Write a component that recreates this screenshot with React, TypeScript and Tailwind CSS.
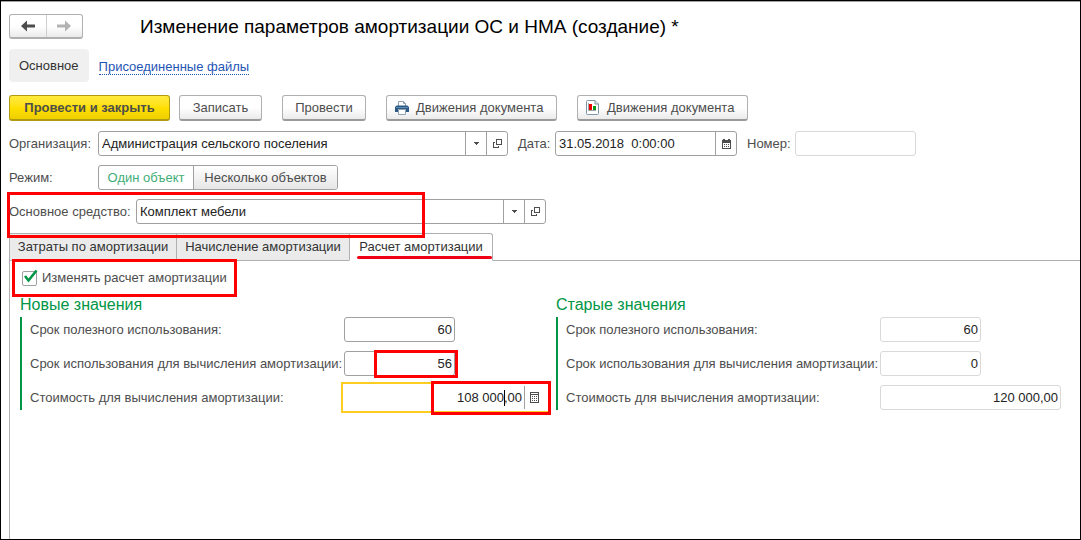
import { useState } from "react";
import type { ReactNode } from "react";

const line = "border-[#a0a0a0]";
const buttonLook =
  "flex h-[26px] items-center rounded-[3px] border border-[#b0b0b0] border-b-2 border-b-[#9a9a9a] bg-linear-to-b from-white from-50% to-[#ebebeb] text-[#4d4d4d]";

function ArrowIcon({ back = false }: { back?: boolean }) {
  return (
    <svg width="16" height="12" viewBox="0 0 16 12" className={back ? "text-[#4d4d4d]" : "text-[#b3b3b3]"}>
      {back ? (
        <path d="M1 6 7 .5V4.500h8v3H7v4z" fill="currentColor" />
      ) : (
        <path d="M15 6 9 .5V4.500H1v3h8v4z" fill="currentColor" />
      )}
    </svg>
  );
}

function PrinterIcon() {
  return (
    <svg width="14" height="14" viewBox="0 0 14 14">
      <path d="M3.500 5V.5h5l2 2V5" fill="#fff" stroke="#8fa2b1" />
      <path d="M8.500.5v2h2" fill="none" stroke="#8fa2b1" />
      <path d="M1.500 4.500h11L14 6v5h-3V8.500H3V11H0V6z" fill="#2c5a85" />
      <path d="M1 6.500h12" stroke="#5e8bb0" />
      <path d="M3.500 8.500h7v5h-7z" fill="#fff" stroke="#8fa2b1" />
    </svg>
  );
}

function ReportIcon() {
  return (
    <svg width="14" height="15" viewBox="0 0 14 15">
      <path d="M.5 1.500q0-1 1-1H9l3.500 3.500v9.500q0 1-1 1h-10q-1 0-1-1z" fill="#fff" stroke="#8095a5" />
      <path d="M9 .5V4h3.500" fill="#e4eaee" stroke="#8095a5" />
      <path d="M2.500 3v7.500H10" fill="none" stroke="#9aa5ad" />
      <path d="M3 4h3v6H3z" fill="#f00000" />
      <path d="M7 6h3v4H7z" fill="#0a9a1a" />
    </svg>
  );
}

function CalendarIcon() {
  return (
    <svg width="9" height="10" viewBox="0 0 9 10" shapeRendering="crispEdges">
      <path d="M0 1h1V0h2v1h3V0h2v1h1v9H0z" fill="#4d4d4d" />
      <path d="M1 4h7v5H1z" fill="#fff" />
      <path d="M2 5h1v1H2zM4 5h1v1H4zM6 5h1v1H6zM2 7h1v1H2zM4 7h1v1H4zM6 7h1v1H6z" fill="#4d4d4d" />
    </svg>
  );
}

function CalculatorIcon() {
  return (
    <svg width="9" height="11" viewBox="0 0 9 11" shapeRendering="crispEdges">
      <path d="M.5.5h8v10h-8zM0 2.500h9" fill="none" stroke="#4d4d4d" />
      <path
        d="M2 4h1v1H2zM4 4h1v1H4zM6 4h1v1H6zM2 6h1v1H2zM4 6h1v1H4zM6 6h1v1H6zM2 8h1v1H2zM4 8h1v1H4zM6 8h1v1H6z"
        fill="#4d4d4d"
      />
    </svg>
  );
}

function OpenIcon() {
  return (
    <svg width="9" height="9" viewBox="0 0 9 9" shapeRendering="crispEdges">
      <path d="M3.500.5h5v5h-5zM2 3.500H.5v5h5V7" fill="none" stroke="#4d4d4d" />
    </svg>
  );
}

// Red frame that points at a place in the form
function Mark({ className }: { className: string }) {
  return <span className={`pointer-events-none absolute border-3 border-[#f00] ${className}`} />;
}

function Picker({ id, value }: { id: string; value: string }) {
  return (
    <div className={`flex h-[25px] w-[410px] rounded-[3px] border ${line}`}>
      <div className="relative flex-1">
        <select id={id} className="h-full w-full appearance-none bg-transparent pl-[3px] text-[#222] outline-none">
          <option>{value}</option>
        </select>
        <span
          className={`pointer-events-none absolute inset-y-0 right-0 flex w-[21px] items-center justify-center border-l ${line}`}
        >
          <svg width="5" height="3" viewBox="0 0 5 3" shapeRendering="crispEdges">
            <path d="M0 0h5v1H4v1H3v1H2V2H1V1H0z" fill="#4d4d4d" />
          </svg>
        </span>
      </div>
      <button aria-label="Открыть" className={`flex w-[21px] items-center justify-center border-l ${line}`}>
        <OpenIcon />
      </button>
    </div>
  );
}

function Group({ title, children }: { title: string; children: ReactNode }) {
  return (
    <section>
      <h2 className="h-[22px] text-base leading-5 text-[#009646]">{title}</h2>
      <div className="flex flex-col gap-[9px] border-l-2 border-[#009646] pl-2">{children}</div>
    </section>
  );
}

function Row({ id, label, children }: { id: string; label: string; children: ReactNode }) {
  return (
    <div className="flex h-[25px] items-center">
      <label htmlFor={id} className="w-[314px] shrink-0 whitespace-nowrap">
        {label}
      </label>
      {children}
    </div>
  );
}

const numberBox = "h-[25px] rounded-[3px] border pr-[2px] text-right text-[#222] outline-none";

export default function App() {
  const [changeCalc, setChangeCalc] = useState(true);

  return (
    <main className="flex min-h-screen flex-col border border-black bg-white pl-2 font-['Liberation_Sans',Arial,sans-serif] text-[13px] leading-4 text-[#4d4d4d]">
      <header className="-ml-2 flex items-center border-t border-[#a0a0a0] pt-3 pl-2">
        <div className="flex h-[25px] w-[74px] rounded-[3px] border border-b-2 border-[#b0b0b0] bg-linear-to-b from-white from-50% to-[#ebebeb]">
          <button aria-label="Назад" className="flex flex-1 items-center justify-center">
            <ArrowIcon back />
          </button>
          <button aria-label="Вперед" className="flex flex-1 items-center justify-center border-l border-[#d0d0d0]">
            <ArrowIcon />
          </button>
        </div>
        <h1 className="ml-[57px] text-[19px] leading-[25px] text-black">
          Изменение параметров амортизации ОС и НМА (создание) *
        </h1>
      </header>

      <nav className="mt-[10px] flex h-[33px] items-center gap-[10px]">
        <button className="h-full rounded-[4px] bg-[#f0f0f0] px-[10px] text-[#333]">Основное</button>
        <a href="#files" className="mt-1 border-b border-dotted border-[#1f55b5] leading-[14px] text-[#1f55b5]">
          Присоединенные файлы
        </a>
      </nav>

      <div className="mt-[13px] flex">
        <button className="h-[26px] w-[161px] rounded-[3px] border border-b-2 border-[#b09a10] bg-linear-to-b from-[#ffea3d] via-[#ffe000] to-[#efcf00] font-bold text-[#4d4d4d]">
          Провести и закрыть
        </button>
        <button className={`${buttonLook} ml-[9px] w-[83px] justify-center`}>Записать</button>
        <button className={`${buttonLook} ml-5 w-[84px] justify-center`}>Провести</button>
        <button className={`${buttonLook} ml-5 w-[171px] gap-[7px] pl-2`}>
          <PrinterIcon />
          Движения документа
        </button>
        <button className={`${buttonLook} ml-5 w-[171px] gap-[7px] pl-2`}>
          <ReportIcon />
          Движения документа
        </button>
      </div>

      <div className="mt-[10px] flex items-center">
        <label htmlFor="org" className="w-[89px]">
          Организация:
        </label>
        <Picker id="org" value="Администрация сельского поселения" />
        <label htmlFor="date" className="ml-[10px] w-[37px]">
          Дата:
        </label>
        <div className={`flex h-[25px] w-[182px] rounded-[3px] border ${line}`}>
          <input
            id="date"
            defaultValue="31.05.2018  0:00:00"
            className="min-w-0 flex-1 pl-[3px] text-[#222] outline-none"
          />
          <button aria-label="Календарь" className={`flex w-[21px] items-center justify-center border-l ${line}`}>
            <CalendarIcon />
          </button>
        </div>
        <label htmlFor="number" className="ml-[10px] w-12">
          Номер:
        </label>
        <input id="number" className="h-[25px] w-[121px] rounded-[3px] border border-[#d9d9d9] px-[3px] outline-none" />
      </div>

      <div className="mt-[9px] flex items-center">
        <span className="w-[89px]">Режим:</span>
        <div className={`flex h-[25px] w-[240px] overflow-hidden rounded-[3px] border ${line}`}>
          <button className="w-[94px] text-[#3fae78]">Один объект</button>
          <button className={`flex-1 border-l bg-linear-to-b from-white to-[#e6e6e6] ${line}`}>
            Несколько объектов
          </button>
        </div>
      </div>

      <div className="relative mt-[9px] flex items-center">
        <label htmlFor="asset" className="w-[127px]">
          Основное средство:
        </label>
        <Picker id="asset" value="Комплект мебели" />
        <Mark className="-top-[7px] -left-[2px] z-10 h-[46px] w-[418px]" />
      </div>

      <div role="tablist" className="mt-[9px] flex h-7 text-[#333]">
        <button role="tab" className="w-[167px] border border-r-0 border-[#b0b0b0] bg-[#ebebeb]">
          Затраты по амортизации
        </button>
        <button role="tab" className="w-[173px] border border-r-0 border-[#b0b0b0] bg-[#ebebeb]">
          Начисление амортизации
        </button>
        <button
          role="tab"
          aria-selected="true"
          className="relative w-[144px] rounded-tr-[3px] border border-[#b0b0b0] border-b-white"
        >
          Расчет амортизации
          <span className="absolute right-0 bottom-px left-[7px] h-[3px] rounded-full bg-[#f00014]" />
        </button>
        <div className="flex-1 border-b border-[#b0b0b0]" />
      </div>

      <div className="flex-1 border-l border-[#b0b0b0] pr-3 pl-[10px]">
        <div className="relative flex h-[34px] items-center">
          <label className="flex items-center gap-[5px] pl-[2px]">
            <span className="relative h-[15px] w-[15px]">
              <input
                type="checkbox"
                checked={changeCalc}
                onChange={(e) => setChangeCalc(e.target.checked)}
                className={`block h-[15px] w-[15px] appearance-none rounded-[2px] border ${line}`}
              />
              {changeCalc && (
                <svg
                  width="15"
                  height="15"
                  viewBox="0 0 15 15"
                  className="pointer-events-none absolute inset-0 overflow-visible"
                >
                  <path d="M3 5 6.500 9.500 14.500-.5" fill="none" stroke="#009646" strokeWidth="2.600" />
                </svg>
              )}
            </span>
            Изменять расчет амортизации
          </label>
          <Mark className="-top-[2px] -left-2 h-[38px] w-[225px]" />
        </div>

        <div className="grid grid-cols-2 gap-x-6">
          <Group title="Новые значения">
            <Row id="term" label="Срок полезного использования:">
              <input id="term" defaultValue="60" className={`${numberBox} w-[111px] ${line}`} />
            </Row>
            <Row id="calcTerm" label="Срок использования для вычисления амортизации:">
              <div className="relative">
                <input id="calcTerm" defaultValue="56" className={`${numberBox} block w-[111px] ${line}`} />
                <Mark className="-top-px -right-[3px] h-7 w-[84px]" />
              </div>
            </Row>
            <Row id="cost" label="Стоимость для вычисления амортизации:">
              <div className="relative flex h-[25px] w-[203px] shrink-0 items-center pr-[3px] outline-2 outline-offset-1 outline-[#fc2]">
                <input
                  id="cost"
                  defaultValue="108 000,00"
                  className="h-full min-w-0 flex-1 pr-[2px] text-right text-[#222] outline-none"
                />
                <span className="absolute right-[42px] h-4 w-px bg-black" />
                <button
                  aria-label="Калькулятор"
                  className={`flex h-[23px] w-5 items-center justify-center border-l ${line}`}
                >
                  <CalculatorIcon />
                </button>
                <Mark className="-top-1 -right-1 h-[34px] w-[120px]" />
              </div>
            </Row>
          </Group>

          <Group title="Старые значения">
            <Row id="oldTerm" label="Срок полезного использования:">
              <input id="oldTerm" readOnly value="60" className={`${numberBox} w-[101px] border-[#d9d9d9]`} />
            </Row>
            <Row id="oldCalcTerm" label="Срок использования для вычисления амортизации:">
              <input id="oldCalcTerm" readOnly value="0" className={`${numberBox} w-[101px] border-[#d9d9d9]`} />
            </Row>
            <Row id="oldCost" label="Стоимость для вычисления амортизации:">
              <input id="oldCost" readOnly value="120 000,00" className={`${numberBox} w-[181px] border-[#d9d9d9]`} />
            </Row>
          </Group>
        </div>
      </div>
    </main>
  );
}
